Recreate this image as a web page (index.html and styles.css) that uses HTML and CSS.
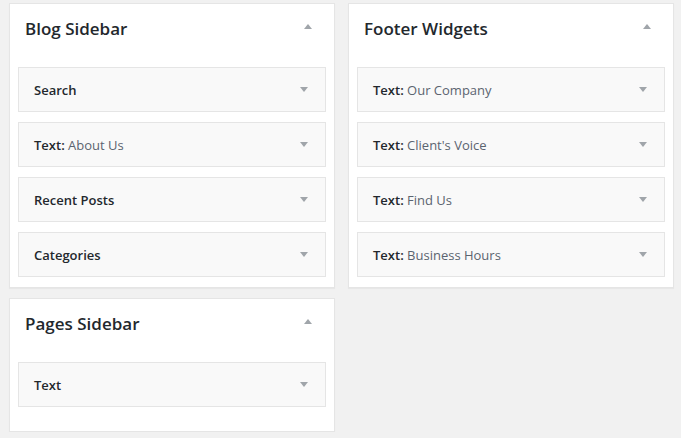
FILE: index.html
```html
<!DOCTYPE html>
<html>
<head>
<meta charset="utf-8">
<link rel="stylesheet" href="styles.css">
</head>
<body>
<div class="sidebars">
  <div class="column">
    <section class="panel">
      <div class="panel-head">
        <h2 class="panel-title">Blog Sidebar</h2>
        <svg class="arrow arrow-up" width="8" height="5" viewBox="0 0 8 5"><path d="M0 5 L4 0 L8 5 Z"/></svg>
      </div>
      <div class="widgets">
        <div class="widget"><span class="wt">Search</span><svg class="arrow" width="8" height="5" viewBox="0 0 8 5"><path d="M0 0 L8 0 L4 5 Z"/></svg></div>
        <div class="widget"><span class="wt">Text:<span class="sub"> About Us</span></span><svg class="arrow" width="8" height="5" viewBox="0 0 8 5"><path d="M0 0 L8 0 L4 5 Z"/></svg></div>
        <div class="widget"><span class="wt">Recent Posts</span><svg class="arrow" width="8" height="5" viewBox="0 0 8 5"><path d="M0 0 L8 0 L4 5 Z"/></svg></div>
        <div class="widget"><span class="wt">Categories</span><svg class="arrow" width="8" height="5" viewBox="0 0 8 5"><path d="M0 0 L8 0 L4 5 Z"/></svg></div>
      </div>
    </section>
    <section class="panel panel-short">
      <div class="panel-head">
        <h2 class="panel-title">Pages Sidebar</h2>
        <svg class="arrow arrow-up" width="8" height="5" viewBox="0 0 8 5"><path d="M0 5 L4 0 L8 5 Z"/></svg>
      </div>
      <div class="widgets">
        <div class="widget"><span class="wt">Text</span><svg class="arrow" width="8" height="5" viewBox="0 0 8 5"><path d="M0 0 L8 0 L4 5 Z"/></svg></div>
      </div>
    </section>
  </div>
  <div class="column">
    <section class="panel">
      <div class="panel-head">
        <h2 class="panel-title">Footer Widgets</h2>
        <svg class="arrow arrow-up" width="8" height="5" viewBox="0 0 8 5"><path d="M0 5 L4 0 L8 5 Z"/></svg>
      </div>
      <div class="widgets">
        <div class="widget"><span class="wt">Text:<span class="sub"> Our Company</span></span><svg class="arrow" width="8" height="5" viewBox="0 0 8 5"><path d="M0 0 L8 0 L4 5 Z"/></svg></div>
        <div class="widget"><span class="wt">Text:<span class="sub"> Client's Voice</span></span><svg class="arrow" width="8" height="5" viewBox="0 0 8 5"><path d="M0 0 L8 0 L4 5 Z"/></svg></div>
        <div class="widget"><span class="wt">Text:<span class="sub"> Find Us</span></span><svg class="arrow" width="8" height="5" viewBox="0 0 8 5"><path d="M0 0 L8 0 L4 5 Z"/></svg></div>
        <div class="widget"><span class="wt">Text:<span class="sub"> Business Hours</span></span><svg class="arrow" width="8" height="5" viewBox="0 0 8 5"><path d="M0 0 L8 0 L4 5 Z"/></svg></div>
      </div>
    </section>
  </div>
</div>
</body>
</html>
```
FILE: styles.css
```css
html, body {
  margin: 0;
  padding: 0;
  background: #f1f1f1;
  font-family: "Open Sans", "Liberation Sans", sans-serif;
  color: #23282d;
}
.sidebars {
  display: flex;
  align-items: flex-start;
  gap: 13px;
  padding: 3px 0 0 9px;
}
.column {
  display: flex;
  flex-direction: column;
  gap: 10px;
  width: 326px;
}
.panel {
  background: #fff;
  border: 1px solid #e5e5e5;
  box-shadow: 0 1px 1px rgba(0,0,0,0.04);
  padding: 0 8px 10px 8px;
}
.panel-short {
  padding-bottom: 24px;
}
.panel-head {
  height: 49px;
  display: flex;
  align-items: center;
  justify-content: space-between;
  padding: 0 14px 4px 7px;
}
.panel-title {
  margin: 0;
  font-size: 17px;
  font-weight: 600;
  color: #23282d;
}
.arrow {
  display: block;
  fill: #a0a5aa;
}
.arrow-up {
  margin-bottom: 4px;
}
.widgets {
  display: flex;
  flex-direction: column;
  gap: 10px;
  padding-top: 10px;
}
.widget {
  height: 43px;
  border: 1px solid #e5e5e5;
  background: #f9f9f9;
  display: flex;
  align-items: center;
  justify-content: space-between;
  padding: 0 17px 0 15px;
}
.wt {
  font-size: 13px;
  font-weight: 600;
  color: #23282d;
}
.sub {
  font-weight: 400;
  color: #5b6470;
}
```
